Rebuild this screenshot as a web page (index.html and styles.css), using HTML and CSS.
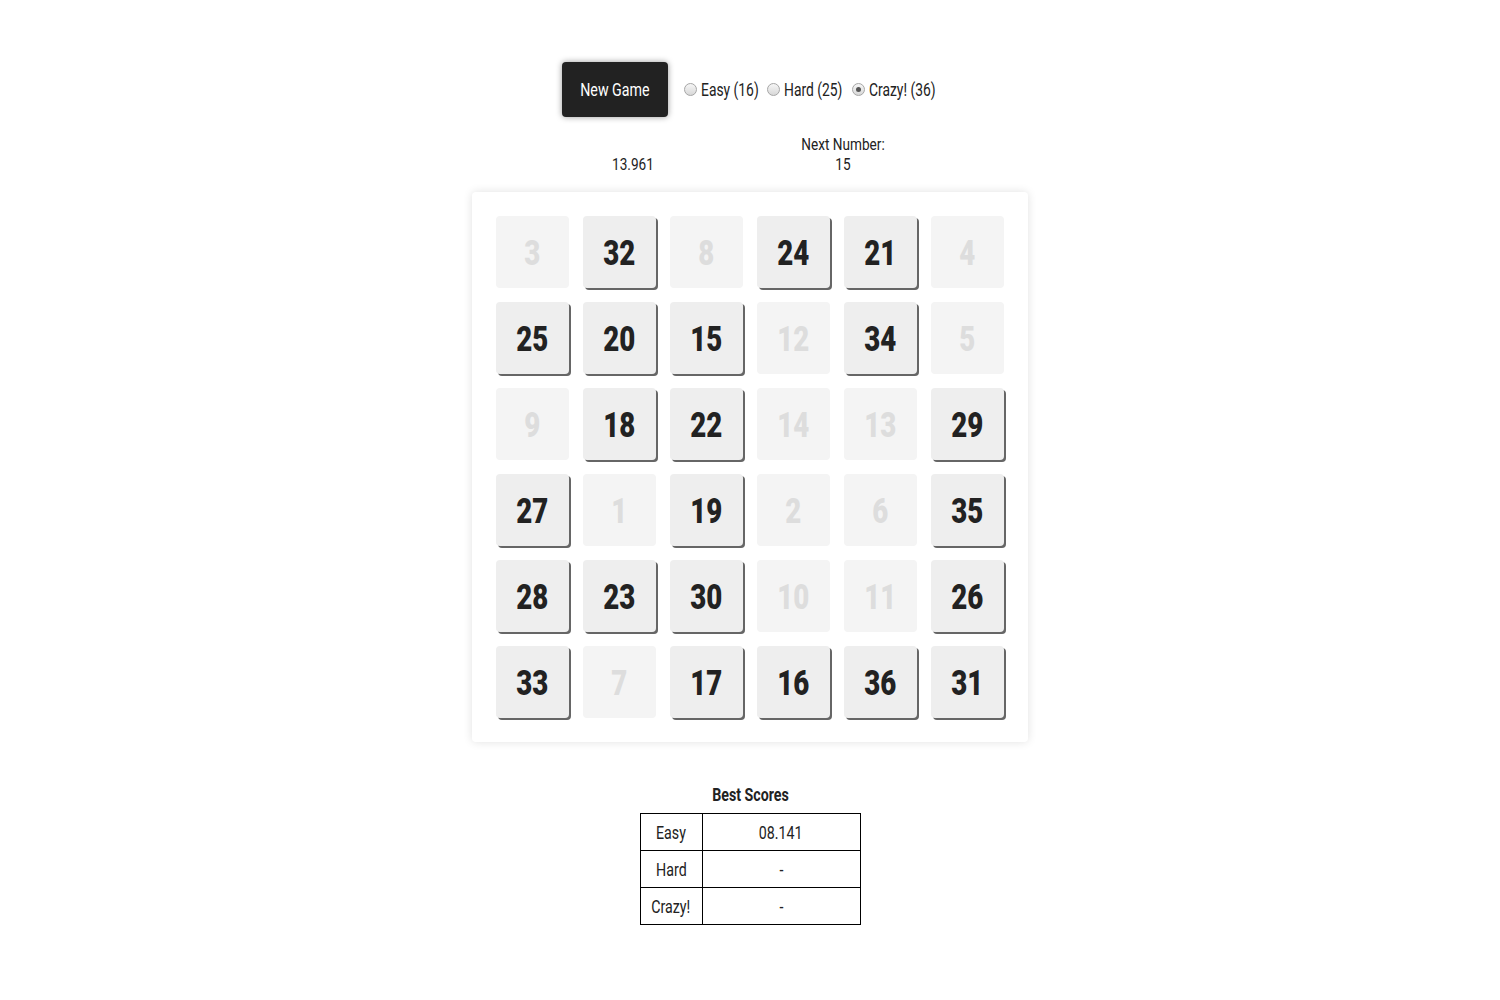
FILE: index.html
```html
<!DOCTYPE html>
<html lang="en">
<head>
    <meta charset="UTF-8">
    <title>Number Rush</title>
    <link rel="stylesheet" href="styles.css">
</head>
<body>
    <main>
    <section class="controls">
        <button class="new-game"><span class="narrow">New Game</span></button>
        <label class="level level--easy"><input type="radio" name="level"><span class="narrow">Easy (16)</span></label>
        <label class="level level--hard"><input type="radio" name="level"><span class="narrow">Hard (25)</span></label>
        <label class="level level--crazy"><input type="radio" name="level" checked><span class="narrow">Crazy! (36)</span></label>
    </section>
    <section class="status">
        <p class="timer">13.961</p>
        <p class="next">Next Number:<br>15</p>
    </section>
    <section class="board">
        <div class="tile done"><span>3</span></div>
        <div class="tile"><span>32</span></div>
        <div class="tile done"><span>8</span></div>
        <div class="tile"><span>24</span></div>
        <div class="tile"><span>21</span></div>
        <div class="tile done"><span>4</span></div>
        <div class="tile"><span>25</span></div>
        <div class="tile"><span>20</span></div>
        <div class="tile"><span>15</span></div>
        <div class="tile done"><span>12</span></div>
        <div class="tile"><span>34</span></div>
        <div class="tile done"><span>5</span></div>
        <div class="tile done"><span>9</span></div>
        <div class="tile"><span>18</span></div>
        <div class="tile"><span>22</span></div>
        <div class="tile done"><span>14</span></div>
        <div class="tile done"><span>13</span></div>
        <div class="tile"><span>29</span></div>
        <div class="tile"><span>27</span></div>
        <div class="tile done"><span>1</span></div>
        <div class="tile"><span>19</span></div>
        <div class="tile done"><span>2</span></div>
        <div class="tile done"><span>6</span></div>
        <div class="tile"><span>35</span></div>
        <div class="tile"><span>28</span></div>
        <div class="tile"><span>23</span></div>
        <div class="tile"><span>30</span></div>
        <div class="tile done"><span>10</span></div>
        <div class="tile done"><span>11</span></div>
        <div class="tile"><span>26</span></div>
        <div class="tile"><span>33</span></div>
        <div class="tile done"><span>7</span></div>
        <div class="tile"><span>17</span></div>
        <div class="tile"><span>16</span></div>
        <div class="tile"><span>36</span></div>
        <div class="tile"><span>31</span></div>
    </section>
    <section class="scores">
        <h3>Best Scores</h3>
        <table>
            <tr><td><span class="narrow">Easy</span></td><td><span class="narrow">08.141</span></td></tr>
            <tr><td><span class="narrow">Hard</span></td><td><span class="narrow">-</span></td></tr>
            <tr><td><span class="narrow">Crazy!</span></td><td><span class="narrow">-</span></td></tr>
        </table>
    </section>
    </main>
</body>
</html>
```
FILE: styles.css
```css
body{
    margin:0;
    background-color: white;
    color: #222;
    font-family: Roboto, "Liberation Sans", sans-serif;
    font-size: 18px;
}
main{
    display: flex;
    flex-direction: column;
    align-items: center;
    padding-top: 62px;
}
/* the original font is a condensed one, we squeeze Roboto instead */
.narrow{
    display: inline-block;
    white-space: nowrap;
    transform: scaleX(0.79);
}
.controls{
    display: flex;
    align-items: center;
    margin-left: 4px;
}
.new-game{
    width: 106px;
    height: 55px;
    background-color: #222;
    color: white;
    border: none;
    border-radius: 4px;
    box-shadow: 0 0 6px rgba(0,0,0,0.4);
    font-family: inherit;
    font-size: 18px;
    margin-right: 16px;
    padding: 0;
}
.level{
    display: flex;
    align-items: center;
    gap: 4px;
    margin-right: 9px;
}
.level .narrow{
    transform: scaleX(0.77);
    transform-origin: left center;
}
.level--easy .narrow{ width: 57px; }
.level--hard .narrow{ width: 61px; }
.level--crazy .narrow{ width: 64px; }
.level--hard{ margin-right: 7px; }
.level input{
    appearance: none;
    margin: 0;
    width: 13px;
    height: 13px;
    border: 1px solid #a6a6a6;
    border-radius: 50%;
    background: linear-gradient(#f6f6f6, #d8d8d8);
    display: flex;
    align-items: center;
    justify-content: center;
}
.level input:checked::after{
    content: "";
    width: 5px;
    height: 5px;
    border-radius: 50%;
    background-color: #555;
}
.status{
    display: flex;
    width: 420px;
    margin-top: 17px;
    margin-left: -24px;
    font-size: 17px;
    line-height: 20px;
}
.status p{
    margin: 0;
    text-align: center;
    width: 210px;
    transform: scaleX(0.8);
}
.timer{
    padding-top: 20px;
}
.board{
    display: grid;
    grid-template-columns: repeat(6, 73px);
    grid-auto-rows: 72px;
    gap: 14px;
    padding: 24px;
    margin-top: 18px;
    background-color: white;
    border-radius: 4px;
    box-shadow: 0 0 10px rgba(0,0,0,0.12);
}
.tile{
    display: flex;
    align-items: center;
    justify-content: center;
    background-color: #eee;
    border-radius: 4px;
    box-shadow: 2px 2px 0 #666;
    font-size: 35px;
    font-weight: 900;
    color: #222;
}
.tile span{
    display: inline-block;
    transform: scaleX(0.79);
    margin-top: 2px;
}
.tile.done{
    background-color: #f4f4f4;
    color: #ddd;
    box-shadow: none;
}
.scores{
    margin-top: 42px;
    text-align: center;
}
.scores h3{
    margin: 0 0 8px 0;
    font-size: 18px;
    transform: scaleX(0.79);
}
table{
    border-collapse: collapse;
    width: 221px;
}
td{
    border: 1px solid black;
    height: 36px;
    padding: 0;
    text-align: center;
}
td:first-child{
    width: 61px;
}
```
